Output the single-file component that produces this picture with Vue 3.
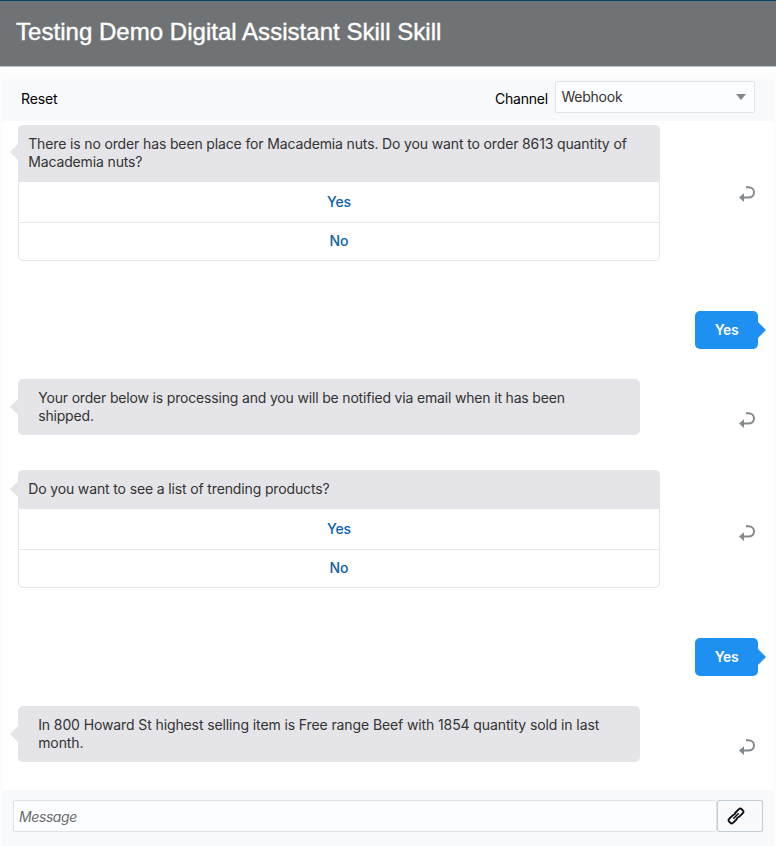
<script setup>
import { ref } from 'vue'

const draft = ref('')
const entries = [
  {
    kind: 'card',
    lines: [
      'There is no order has been place for Macademia nuts. Do you want to order 8613 quantity of',
      'Macademia nuts?',
    ],
    options: ['Yes', 'No'],
  },
  { kind: 'user', lines: ['Yes'] },
  {
    kind: 'text',
    lines: ['Your order below is processing and you will be notified via email when it has been', 'shipped.'],
  },
  { kind: 'card', lines: ['Do you want to see a list of trending products?'], options: ['Yes', 'No'] },
  { kind: 'user', lines: ['Yes'] },
  {
    kind: 'text',
    lines: ['In 800 Howard St highest selling item is Free range Beef with 1854 quantity sold in last', 'month.'],
  },
]
</script>

<template>
  <div class="tester">
    <header class="header"><h1>Testing Demo Digital Assistant Skill Skill</h1></header>
    <main class="panel">
      <div class="toolbar">
        <button class="reset">Reset</button>
        <span class="channel">Channel</span>
        <div class="select">
          <span>Webhook</span>
          <svg width="10" height="6" viewBox="0 0 10 6"><path d="M0 0H10L5 6Z" fill="#84888c" /></svg>
        </div>
      </div>

      <section class="chat">
        <div v-for="(entry, i) in entries" :key="i" class="row" :class="entry.kind">
          <div class="bubble">
            <div class="message">
              <div v-for="line in entry.lines" :key="line">{{ line }}</div>
            </div>
            <button v-for="option in entry.options" :key="option" class="option">{{ option }}</button>
          </div>
          <svg v-if="entry.kind !== 'user'" class="return" width="16" height="17" viewBox="0 0 16 17">
            <path d="M7 1.2H9.4C12.7 1.2 15 3.5 15 6.2C15 9.5 12.5 11.6 9.2 11.6H4" fill="none" stroke="#84898d" stroke-width="2" />
            <path d="M0 11.6L5 7.2V16Z" fill="#84898d" />
          </svg>
        </div>
      </section>

      <footer class="composer">
        <input v-model="draft" class="input" placeholder="Message" />
        <button class="attach" aria-label="Attach">
          <svg width="18" height="18" viewBox="0 0 18 18">
            <g transform="rotate(-45 9 9)" fill="none" stroke="#111" stroke-width="1.9">
              <path d="M8.3 6.9Q7.8 6.2 6.8 6.2H2.4Q.2 6.2 .2 8.2V9.8Q.2 11.8 2.4 11.8H6.8Q8.6 11.8 8.8 10.4" />
              <path d="M9.7 11.1Q10.2 11.8 11.2 11.8H15.6Q17.8 11.8 17.8 9.8V8.2Q17.8 6.2 15.6 6.2H11.2Q9.4 6.2 9.2 7.6" />
              <path d="M5.2 9H12.8" stroke-width="1.5" />
            </g>
          </svg>
        </button>
      </footer>
    </main>
  </div>
</template>

<style>
body {
  margin: 0;
  background: #fcfcfc;
}
</style>

<style scoped>
.tester {
  display: flex;
  flex-direction: column;
  box-sizing: border-box;
  height: 846px;
  overflow: hidden;
  color: #333;
  font: 14px/18px Inter, sans-serif;
  letter-spacing: -0.138px;
}
button {
  margin: 0;
  padding: 0;
  border: 0;
  background: none;
  color: inherit;
  font: inherit;
  letter-spacing: inherit;
}
.header {
  box-sizing: border-box;
  height: 67px;
  flex: none;
  padding: 17px 16px 0;
  border-top: 1px solid #084468;
  border-bottom: 1px solid #b8c4ce;
  background: #6f7375;
}
h1 {
  margin: 0;
  color: #fff;
  font: 400 24px/28px "Liberation Sans", Arial, sans-serif;
  letter-spacing: 0.03px;
  -webkit-text-stroke: 0.4px #fff;
}
.panel {
  display: flex;
  flex: 1;
  flex-direction: column;
  min-height: 0;
  margin: 12px 3px 0;
  background: #fff;
}
.toolbar {
  display: flex;
  box-sizing: border-box;
  height: 42px;
  flex: none;
  padding: 2px 18px 0;
  background: #f8f9fb;
}
.reset,
.channel {
  height: 18px;
  margin-top: 9px;
  color: #000;
}
.channel {
  margin-left: auto;
  letter-spacing: -0.2px;
}
.select {
  display: flex;
  box-sizing: border-box;
  width: 200px;
  height: 32px;
  align-items: center;
  justify-content: space-between;
  margin-left: 7px;
  padding: 0 8px 0 5.5px;
  border: 1px solid #dfe4e7;
  border-radius: 2px;
  background: #fcfdfe;
  letter-spacing: -0.25px;
}
.chat {
  flex: 1;
  min-height: 0;
  padding: 4px 15px 0;
}
.row {
  display: flex;
  align-items: center;
  justify-content: space-between;
}
.row.card {
  margin-bottom: 50px;
}
.row.user {
  justify-content: flex-end;
  margin-bottom: 30px;
}
.row.text {
  margin-bottom: 35px;
  letter-spacing: -0.174px;
}
.row.text:last-child {
  margin-bottom: 0;
  letter-spacing: -0.11px;
}
.bubble {
  position: relative;
  box-sizing: border-box;
  border-radius: 5px;
  background: #e5e4e9;
  white-space: nowrap;
}
.bubble::before {
  content: "";
  position: absolute;
  top: 20px;
  left: -8px;
  border: solid transparent;
  border-width: 8px 8px 8px 0;
  border-right-color: #e5e4e9;
}
.card .bubble {
  width: 642px;
  border: 1px solid #e5e4e9;
  background: #fff;
}
.card .bubble::before {
  top: 18px;
  left: -9px;
}
.card:not(:first-child) .bubble::before {
  top: 10px;
}
.card .message {
  padding: 9px 9px 11px 9.2px;
  background: #e5e4e9;
}
.option {
  display: block;
  width: 100%;
  height: 37px;
  padding-bottom: 2px;
  color: #0b5fa9;
  font-weight: 500;
  text-align: center;
}
.option:nth-child(2) {
  height: 41px;
  padding-bottom: 0;
  border-bottom: 1px solid #e7e8ea;
}
.text .bubble {
  width: 622px;
  height: 56px;
  padding: 10px 20px 10px 20.2px;
}
.user .bubble {
  width: 63px;
  height: 38px;
  padding: 10px 0;
  background: #1e90f2;
  color: #fff;
  font-weight: 600;
  letter-spacing: -0.35px;
  text-align: center;
}
.user .bubble::before {
  top: 11px;
  right: -8px;
  left: auto;
  border-width: 8px 0 8px 8px;
  border-left-color: #1e90f2;
}
.return {
  flex: none;
  margin: 2px 3px 0 0;
}
.card:not(:first-child) .return {
  margin-top: 9px;
}
.text .return {
  margin-top: 26px;
}
.composer {
  display: flex;
  box-sizing: border-box;
  height: 56px;
  flex: none;
  padding: 10px 10px 0;
  background: #f8f9fb;
}
.input {
  box-sizing: border-box;
  width: 704px;
  height: 32px;
  padding: 0 5px;
  border: 1px solid #dfe4e7;
  border-radius: 2px;
  outline: 0;
  background: #fcfdfe;
  font: italic 14px/18px Inter, sans-serif;
  letter-spacing: -0.4px;
}
.input::placeholder {
  color: #696b6d;
  opacity: 1;
}
.attach {
  display: flex;
  box-sizing: border-box;
  width: 46px;
  height: 32px;
  align-items: center;
  padding-left: 9px;
  border: 1px solid #c1ced8;
  border-radius: 2px;
}
</style>
